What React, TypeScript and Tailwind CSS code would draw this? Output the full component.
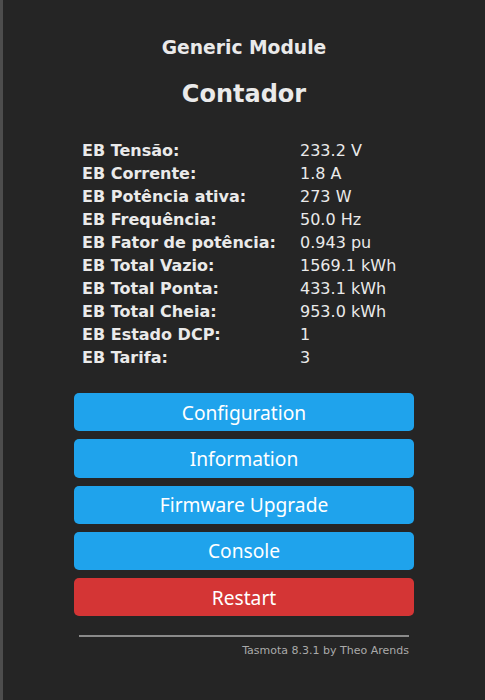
import React from 'react';

const rows = [
  ['EB Tensão:', '233.2 V'],
  ['EB Corrente:', '1.8 A'],
  ['EB Potência ativa:', '273 W'],
  ['EB Frequência:', '50.0 Hz'],
  ['EB Fator de potência:', '0.943 pu'],
  ['EB Total Vazio:', '1569.1 kWh'],
  ['EB Total Ponta:', '433.1 kWh'],
  ['EB Total Cheia:', '953.0 kWh'],
  ['EB Estado DCP:', '1'],
  ['EB Tarifa:', '3'],
];

const buttons = ['Configuration', 'Information', 'Firmware Upgrade', 'Console'];

export default function App() {
  return (
    <div className="flex min-h-[700px] w-full">
      {/* left edge of the backdrop */}
      <div className="w-[3px] bg-[#4d4d4d]" />

      <div className="flex-1 bg-[#252525] text-[#eaeaea] [font-family:'DejaVu_Sans',Verdana,sans-serif]">
        <div className="mx-auto w-[340px] pt-[37px]">
          <h3 className="text-center text-[18.72px] leading-[22px] font-bold">Generic Module</h3>
          <h2 className="mt-[21px] text-center text-[24px] leading-[28px] font-bold">Contador</h2>

          {/* Sensor table */}
          <div className="mt-[31px] pl-[8px]">
            {rows.map(([label, value]) => (
              <div key={label} className="flex h-[23px] items-center text-[16px]">
                <div className="w-[218px] font-bold">{label}</div>
                <div>{value}</div>
              </div>
            ))}
          </div>

          {/* Menu buttons */}
          <div className="mt-[24px] flex flex-col gap-[8px] [font-family:'Noto_Sans',sans-serif]">
            {buttons.map((b) => (
              <button
                key={b}
                className="h-[38.25px] w-full rounded-[5px] bg-[#1fa3ec] pt-[2px] text-[19.2px] text-white"
              >
                {b}
              </button>
            ))}
            <button className="h-[38.25px] w-full rounded-[5px] bg-[#d43535] pt-[2px] text-[19.2px] text-white">
              Restart
            </button>
          </div>

          {/* Footer */}
          <div className="mt-[19px] px-[5px] text-right text-[11px] text-[#aaaaaa]">
            <hr className="border-t-2 border-[#8a8a8a]" />
            <div className="mt-[6px]">Tasmota 8.3.1 by Theo Arends</div>
          </div>
        </div>
      </div>
    </div>
  );
}
